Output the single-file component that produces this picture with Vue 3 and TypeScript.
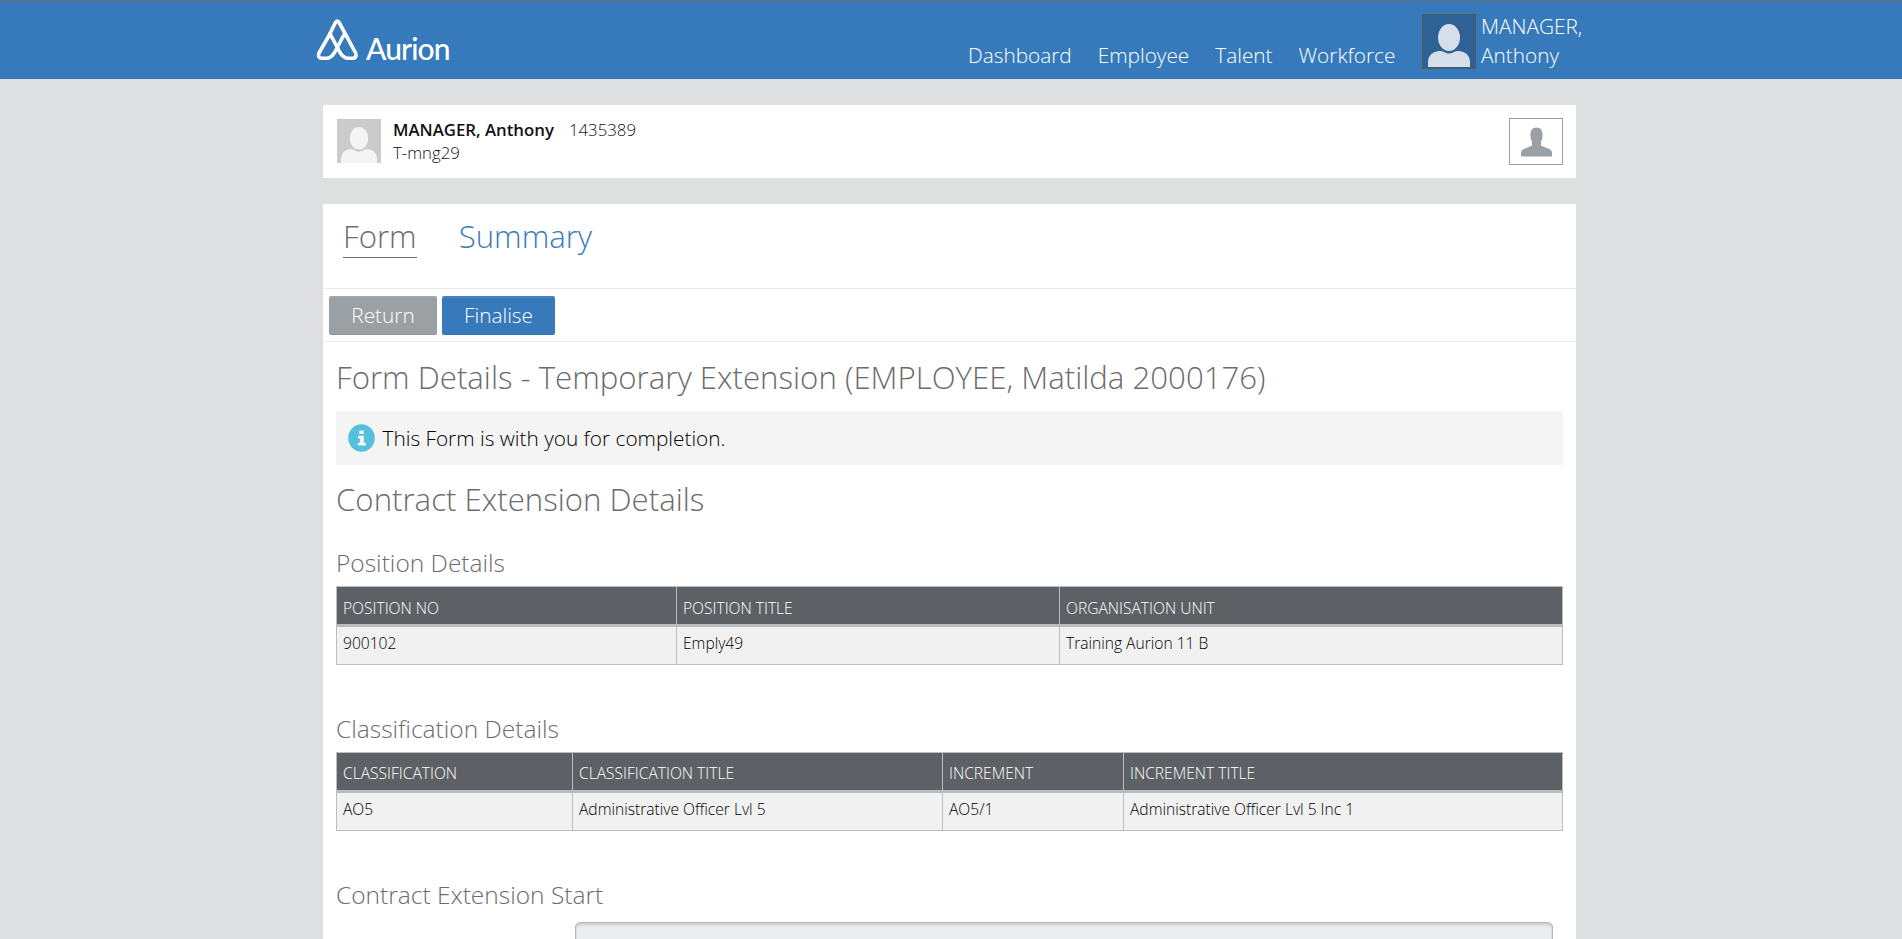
<script setup lang="ts">
interface Column {
  label: string
  value: string
  width: number
}

interface DetailTable {
  title: string
  columns: Column[]
}

const navItems: string[] = ['Dashboard', 'Employee', 'Talent', 'Workforce']

const tables: DetailTable[] = [
  {
    title: 'Position Details',
    columns: [
      { label: 'POSITION NO', value: '900102', width: 340 },
      { label: 'POSITION TITLE', value: 'Emply49', width: 383 },
      { label: 'ORGANISATION UNIT', value: 'Training Aurion 11 B', width: 503 },
    ],
  },
  {
    title: 'Classification Details',
    columns: [
      { label: 'CLASSIFICATION', value: 'AO5', width: 236 },
      { label: 'CLASSIFICATION TITLE', value: 'Administrative Officer Lvl 5', width: 370 },
      { label: 'INCREMENT', value: 'AO5/1', width: 181 },
      { label: 'INCREMENT TITLE', value: 'Administrative Officer Lvl 5 Inc 1', width: 439 },
    ],
  },
]

const tracks = (columns: Column[]): string => columns.map((c) => `${c.width}fr`).join(' ')
</script>

<template>
  <div class="page">
    <header class="topbar">
      <div class="logo">
        <svg width="44" height="44" viewBox="0 0 44 44">
          <g fill="none" stroke="#fff" stroke-width="3.6" stroke-linejoin="round" stroke-linecap="round">
            <path d="M14 16.5 L19.2 6 Q21.3 2.3 23.4 6 L39.6 36 Q41.300 41.300 36.500 41.300 L31.500 41.300 Q27.500 41 24 35.500 L14.200 17" />
            <path d="M28.400 17 L18.600 35.500 Q15 41 11 41.300 L6 41.300 Q1.300 41.300 3 36 L14.200 16.500" />
          </g>
        </svg>
        <span class="wordmark">Aurion</span>
      </div>
      <nav class="nav">
        <a v-for="item in navItems" :key="item">{{ item }}</a>
      </nav>
      <div class="account">
        <svg class="account-photo" width="54" height="55" viewBox="0 0 54 55">
          <rect x="1" y="1" width="52" height="53" fill="#2e6195" stroke="#445b70" stroke-width="2" />
          <ellipse cx="27" cy="23.500" rx="11" ry="13.500" fill="#d6dfe9" />
          <path d="M6 53 V47 Q7 38 17 37 Q20 36.700 22 38 Q27 41 32 38 Q34 36.700 37 37 Q47 38 48 47 V53 Z" fill="#d6dfe9" />
        </svg>
        <div class="account-name"><span>MANAGER,</span><span>Anthony</span></div>
      </div>
    </header>

    <section class="person">
      <svg class="person-photo" width="44" height="44" viewBox="0 0 44 44">
        <rect width="44" height="44" fill="#cbcbcb" />
        <ellipse cx="22" cy="19.300" rx="9.200" ry="11.300" fill="#f4f4f4" />
        <path d="M4 44 V39 Q5 31 13 30.300 Q16 30 18 31.500 Q22 34 26 31.500 Q28 30 31 30.300 Q39 31 40 39 V44 Z" fill="#f4f4f4" />
      </svg>
      <div class="person-text">
        <div class="person-line"><strong>MANAGER, Anthony</strong><span>1435389</span></div>
        <div class="person-line"><span>T-mng29</span></div>
      </div>
      <button class="person-button" aria-label="Profile">
        <svg width="31" height="30" viewBox="0 0 31 30">
          <path d="M15.500 .5 C20 .5 21.600 4 21.600 8 C21.600 11.500 20.600 13.500 20 14.500 V18.500 L27 21.500 Q31 23 31 26 V29.500 H0 V26 Q0 23 4 21.500 L11 18.500 V14.500 Q9.400 12 9.400 8 C9.400 4 11 .5 15.500 .5 Z" fill="#9aa1a6" />
        </svg>
      </button>
    </section>

    <main class="panel">
      <div class="tabs">
        <a class="tab tab-active">Form</a>
        <a class="tab tab-link">Summary</a>
      </div>
      <div class="actions">
        <button class="btn btn-return">Return</button>
        <button class="btn btn-finalise">Finalise</button>
      </div>
      <div class="content">
        <h1>Form Details - Temporary Extension (EMPLOYEE, Matilda 2000176)</h1>
        <div class="notice">
          <svg width="27" height="28" viewBox="0 0 27 28">
            <ellipse cx="13.500" cy="14" rx="13.300" ry="13.700" fill="#57bfde" />
            <path d="M11.300 6.500 h4.300 v3.600 h-4.300 Z M10 11.700 h5.900 v7 h2 v2.700 h-8 v-2.700 h2 v-4.300 h-1.900 Z" fill="#f4f4f4" />
          </svg>
          <span>This Form is with you for completion.</span>
        </div>
        <h1 class="section-title">Contract Extension Details</h1>
        <template v-for="table in tables" :key="table.title">
          <h2>{{ table.title }}</h2>
          <div class="grid">
            <div class="row head" :style="{ gridTemplateColumns: tracks(table.columns) }">
              <div v-for="c in table.columns" :key="c.label" class="cell">{{ c.label }}</div>
            </div>
            <div class="row" :style="{ gridTemplateColumns: tracks(table.columns) }">
              <div v-for="c in table.columns" :key="c.label" class="cell">{{ c.value }}</div>
            </div>
          </div>
        </template>
        <h2>Contract Extension Start</h2>
        <div class="field"></div>
      </div>
    </main>
  </div>
</template>

<style>
body {
  margin: 0;
  overflow: hidden;
}
</style>

<style scoped>
.page {
  width: 1902px;
  height: 939px;
  overflow: hidden;
  background: #dedfe1;
  font-family: "Open Sans", "Noto Sans", sans-serif;
  font-weight: 300;
  color: #111;
  box-sizing: border-box;
}
.page * {
  box-sizing: border-box;
}
.topbar {
  height: 79px;
  background: #377abb;
  border-top: 2px solid #547797;
  display: flex;
  align-items: flex-start;
  padding-left: 316px;
}
.logo {
  display: flex;
  align-items: flex-start;
  gap: 6px;
  width: 136px;
  margin-top: 15px;
  flex: none;
}
.logo svg {
  flex: none;
}
.wordmark {
  margin-top: 13px;
  font-family: Lato, sans-serif;
  font-size: 30px;
  font-weight: 500;
  line-height: 36px;
  letter-spacing: -0.9px;
  color: #fff;
}
.nav {
  display: flex;
  width: 454px;
  margin-left: 516px;
  margin-top: 39px;
  gap: 26px;
  font-size: 20.8px;
  line-height: 29px;
  color: #fff;
}
.account {
  display: flex;
  gap: 5px;
  margin-top: 12px;
  color: #fff;
}
.account-photo {
  flex: none;
}
.account-name {
  display: flex;
  flex-direction: column;
  margin-top: -2px;
  font-size: 20.8px;
  line-height: 29px;
}
.person {
  width: 1253px;
  height: 73px;
  margin: 26px 0 0 323px;
  padding: 13px 13px 0 14px;
  background: #fff;
  display: flex;
  align-items: flex-start;
}
.person-photo {
  margin-top: 1px;
}
.person-text {
  margin-left: 12px;
  flex: 1;
}
.person-line {
  display: flex;
  gap: 15px;
  font-size: 16.8px;
  line-height: 23px;
}
.person-line strong {
  font-weight: 600;
}
.person-button {
  width: 54px;
  height: 47px;
  padding: 0;
  border: 1px solid #999fa4;
  background: #fff;
  display: flex;
  align-items: center;
  justify-content: center;
}
.panel {
  width: 1253px;
  height: 760px;
  margin: 26px 0 0 323px;
  background: #fff;
}
.tabs {
  height: 85px;
  padding: 11px 0 0 20px;
  display: flex;
  align-items: flex-start;
  gap: 42px;
  border-bottom: 1px solid #e6ebeb;
}
.tab {
  font-size: 31.2px;
  line-height: 42px;
}
.tab-active {
  height: 43px;
  color: #6c6d6e;
  border-bottom: 1px solid #6c6d6e;
}
.tab-link {
  color: #3a7cba;
}
.actions {
  height: 53px;
  display: flex;
  gap: 5px;
  padding: 7px 0 0 6px;
  border-bottom: 1px solid #e6ebeb;
}
.btn {
  height: 39px;
  padding: 0 0 1px;
  border: 0;
  border-radius: 2px;
  font: inherit;
  font-size: 20.8px;
  line-height: 38px;
  color: #fff;
  box-shadow: inset 0 2px 0 rgba(255, 255, 255, 0.08), inset 0 -1px 0 rgba(0, 0, 0, 0.06);
}
.btn-return {
  width: 108px;
  background: #9ba0a4;
}
.btn-finalise {
  width: 113px;
  background: #377abb;
}
.content {
  padding: 14px 13px 0;
}
h1,
h2 {
  margin: 0;
  font-weight: 300;
  color: #6c6c6c;
  white-space: nowrap;
}
h1 {
  font-size: 31.2px;
  line-height: 43px;
}
.notice {
  height: 54px;
  margin-top: 12px;
  padding-left: 12px;
  background: #f4f4f4;
  display: flex;
  align-items: center;
  gap: 7.5px;
  font-size: 20.8px;
  color: #000;
}
.section-title {
  margin-top: 13px;
}
h2 {
  margin-top: 25px;
  font-size: 24.5px;
  line-height: 34px;
}
.grid {
  width: 1227px;
  height: 79px;
  margin: 6px 0 47px;
  border-left: 1px solid #b9bec2;
}
.row {
  display: grid;
  height: 38px;
  background: #f1f1f1;
  border-bottom: 1px solid #b9bec2;
  font-size: 15.6px;
  line-height: 22px;
  color: #000;
}
.head {
  height: 41px;
  background: #5d6165;
  border-top: 1px solid #b9bec2;
  border-bottom-width: 3px;
  color: #fff;
}
.cell {
  padding: 5px 0 0 6px;
  border-right: 1px solid #b9bec2;
}
.head .cell {
  padding-top: 10px;
}
.grid + h2 + .grid .head .cell {
  padding-top: 9px;
}
.field {
  width: 978px;
  height: 44px;
  margin: 10px 0 0 239px;
  background: #ecedef;
  border: 1px solid #b5b7ba;
  border-radius: 5px;
  box-shadow: inset 0 2px 3px rgba(0, 0, 0, 0.14);
}
</style>
